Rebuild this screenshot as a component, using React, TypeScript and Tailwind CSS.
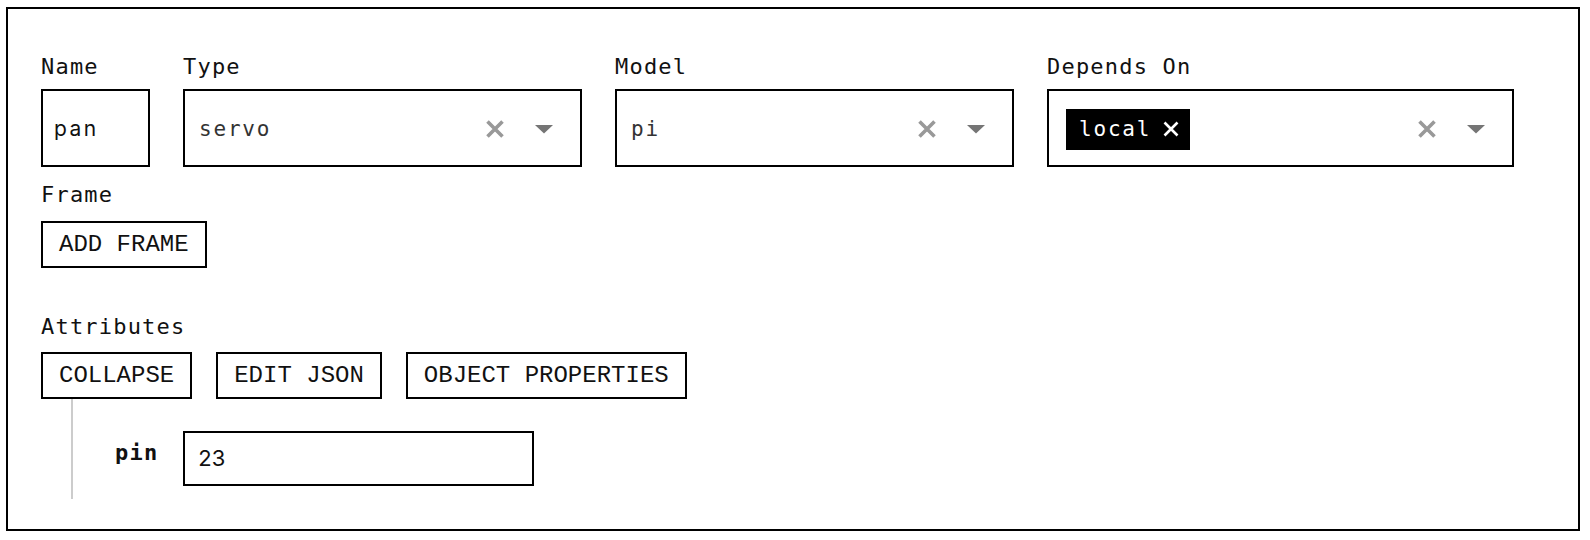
import React from 'react';

const ClearIcon: React.FC = () => (
  <svg width="20" height="20" viewBox="0 0 20 20" className="shrink-0">
    <path d="M2.5 2.5 L17.5 17.5 M17.5 2.5 L2.5 17.5" stroke="#999999" strokeWidth="3.6" />
  </svg>
);

const CaretIcon: React.FC = () => (
  <svg width="18" height="9" viewBox="0 0 18 9" className="shrink-0">
    <polygon points="0,0 18,0 9,8.5" fill="#757575" />
  </svg>
);

const Label: React.FC<{ children: React.ReactNode; className?: string }> = ({ children, className }) => (
  <div
    className={`h-[24px] font-['DejaVu_Sans_Mono',monospace] text-[22px] leading-[24px] tracking-[1.2px] text-[#111] ${className ?? ''}`}>
    {children}
  </div>
);

const Select: React.FC<{ width: string; children: React.ReactNode; padLeft?: string }> = ({
  width,
  children,
  padLeft = 'pl-[14px]',
}) => (
  <div className={`flex h-[78px] ${width} items-center border-2 border-black ${padLeft} pr-[27px]`}>
    <div className="flex min-w-0 flex-1 items-center">{children}</div>
    <div className="flex items-center gap-[30px] pt-[2px]">
      <ClearIcon />
      <CaretIcon />
    </div>
  </div>
);

const ActionButton: React.FC<{ children: React.ReactNode }> = ({ children }) => (
  <button className="h-[47px] border-2 border-black bg-white px-[16px] text-[24px] leading-[43px] text-[#111]">
    {children}
  </button>
);

export default function App() {
  return (
    <div className="min-h-[540px] bg-white pl-[6px] pt-[7px] font-['Liberation_Mono',monospace]">
      <div className="flex h-[524px] w-[1574px] flex-col border-2 border-black pl-[33px] pt-[46px]">
        <div className="flex gap-[33px]">
          <div className="flex flex-col">
            <Label className="mb-[10px]">Name</Label>
            <div className="flex h-[78px] w-[109px] items-center border-2 border-black pl-[11px] pt-[2px] font-['Inter',sans-serif] text-[21px] tracking-[2.4px] text-[#111]">
              pan
            </div>
          </div>
          <div className="flex flex-col">
            <Label className="mb-[10px]">Type</Label>
            <Select width="w-[399px]">
              <span className="pt-[4px] font-['DejaVu_Sans_Mono',monospace] text-[21px] tracking-[1.8px] text-[#333]">
                servo
              </span>
            </Select>
          </div>
          <div className="flex flex-col">
            <Label className="mb-[10px]">Model</Label>
            <Select width="w-[399px]">
              <span className="pt-[4px] font-['DejaVu_Sans_Mono',monospace] text-[21px] tracking-[1.8px] text-[#333]">
                pi
              </span>
            </Select>
          </div>
          <div className="flex flex-col">
            <Label className="mb-[10px]">Depends On</Label>
            <Select width="w-[467px]" padLeft="pl-[17px]">
              <span className="mt-[2px] flex h-[41px] items-center bg-black pl-[13px] pr-[11px] text-white">
                <span className="pt-[2px] font-['DejaVu_Sans_Mono',monospace] text-[21px] tracking-[1.8px]">local</span>
                <svg width="16" height="16" viewBox="0 0 16 16" className="ml-[12px]">
                  <path d="M1.5 1.5 L14.5 14.5 M14.5 1.5 L1.5 14.5" stroke="#ffffff" strokeWidth="2.6" />
                </svg>
              </span>
            </Select>
          </div>
        </div>

        <Label className="mb-[14px] mt-[16px]">Frame</Label>
        <div className="flex">
          <ActionButton>ADD FRAME</ActionButton>
        </div>

        <Label className="mb-[13px] mt-[47px]">Attributes</Label>
        <div className="flex gap-[24px]">
          <ActionButton>COLLAPSE</ActionButton>
          <ActionButton>EDIT JSON</ActionButton>
          <ActionButton>OBJECT PROPERTIES</ActionButton>
        </div>
        <div className="ml-[30px] flex border-l-2 border-[#cccccc] pb-[13px] pl-[42px] pt-[32px]">
          <div className="flex items-start gap-[25px]">
            <div className="pt-[10px] font-['DejaVu_Sans_Mono',monospace] text-[22px] font-bold leading-[24px] tracking-[1.2px] text-[#111]">
              pin
            </div>
            <div className="flex h-[55px] w-[351px] items-center border-2 border-black pl-[13px] font-['Inter',sans-serif] text-[22px] text-[#111]">
              23
            </div>
          </div>
        </div>
      </div>
    </div>
  );
}
